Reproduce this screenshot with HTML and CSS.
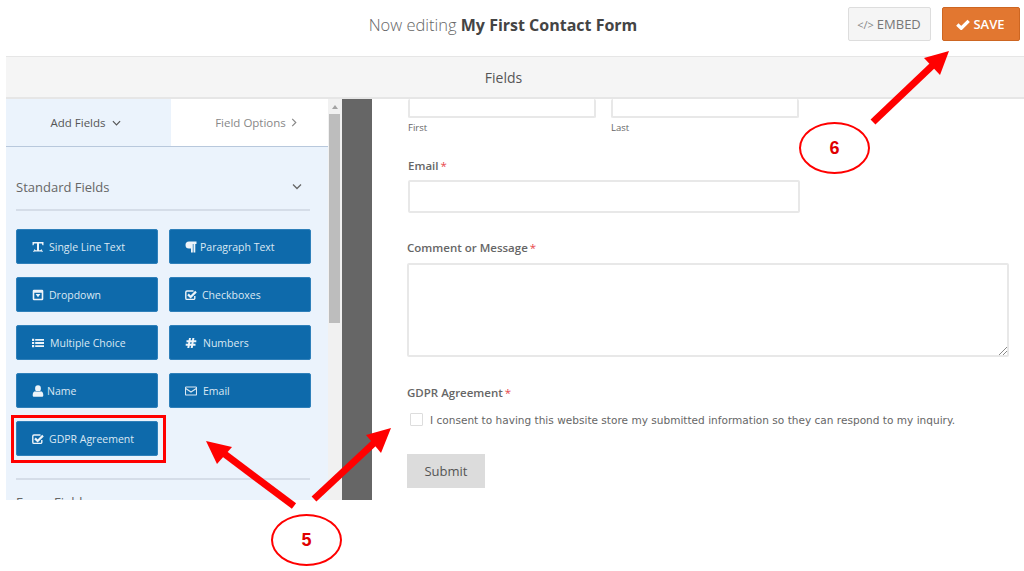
FILE: index.html
```html
<!DOCTYPE html>
<html lang="en">
<head>
<meta charset="utf-8">
<title>Now editing My First Contact Form</title>
<link rel="stylesheet" href="styles.css">
</head>
<body>
<div class="page">
  <header class="topbar">
    <h1 class="title"><span class="title-light">Now editing</span> <strong>My First Contact Form</strong></h1>
    <div class="actions">
      <button class="btn-embed"><span class="code">&lt;/&gt;</span> EMBED</button>
      <button class="btn-save"><svg class="save-check" viewBox="0 0 16 12"><path d="M1.500 6 L6 10.300 L14.500 1.800" fill="none" stroke="currentColor" stroke-width="3.800"/></svg> SAVE</button>
    </div>
  </header>
  <div class="frame">
    <div class="fields-bar">Fields</div>
    <div class="workspace">
      <aside class="sidebar">
        <div class="tabs">
          <div class="tab tab-active">Add Fields <svg class="chev" viewBox="0 0 10 6"><path d="M1 1 L5 5 L9 1"/></svg></div>
          <div class="tab tab-idle">Field Options <svg class="chev chev-r" viewBox="0 0 6 10"><path d="M1 1 L5 5 L1 9"/></svg></div>
        </div>
        <div class="panel">
          <div class="section-head">Standard Fields <svg class="chev" viewBox="0 0 10 6"><path d="M1 1 L5 5 L9 1"/></svg></div>
          <div class="grid">
            <div class="field-btn"><svg class="ico" viewBox="0 0 12 12"><path d="M0.500 1h11v3.300h-1L9.800 2.600H7v6.700h1.300L9.800 8v1.200L11 10.200 9.800 11.200V10.400H2.200v.8L1 10.200 2.200 9.200V8L3.700 9.300H5V2.600H2.200L1.500 4.300h-1z"/></svg>Single Line Text</div>
            <div class="field-btn"><svg class="ico ico-para" viewBox="0 0 12 12"><path d="M4 .5H11.500V3H10.300V11.500H8.500V3H7.800V11.500H6V7.500H4A3.500 3.500 0 0 1 4 .5z"/></svg>Paragraph Text</div>
            <div class="field-btn"><svg class="ico" viewBox="0 0 12 12"><path fill-rule="evenodd" d="M2 .7h8A1.300 1.300 0 0 1 11.300 2v8A1.300 1.300 0 0 1 10 11.300H2A1.300 1.300 0 0 1 .7 10V2A1.300 1.300 0 0 1 2 .7zM2.300 3.800V9.700H9.700V3.800zM3.600 5H8.400L6 8.200z"/></svg>Dropdown</div>
            <div class="field-btn"><svg class="ico" viewBox="0 0 12 12"><path class="check-box" d="M9.800 7v2.200a1.200 1.200 0 0 1-1.200 1.200H2a1.200 1.200 0 0 1-1.200-1.200V3.200A1.200 1.200 0 0 1 2 2H8.500"/><path class="check-tick" d="M3 5.400 L5.600 8 L11 2.600"/></svg>Checkboxes</div>
            <div class="field-btn"><svg class="ico ico-list" viewBox="0 0 12 12"><path d="M0 1.800h2.200v2.200H0zM3.200 2h8.800v1.800H3.200zM0 4.900h2.200v2.200H0zM3.200 5.100h8.800v1.800H3.200zM0 8h2.200v2.200H0zM3.200 8.200h8.800V10H3.200z"/></svg>Multiple Choice</div>
            <div class="field-btn"><svg class="ico ico-list" viewBox="0 0 12 12"><path d="M4 1h2L5.600 3.300H7L7.400 1h2L9 3.300h2.300V5.200H8.700L8.400 6.800H10.500V8.700H8.100L7.700 11h-2L6.100 8.700H4.700L4.300 11h-2L2.700 8.700H.7V6.800H3L3.300 5.200H1.500V3.300H3.600zM5.300 5.200L5 6.800H6.400L6.700 5.200z"/></svg>Numbers</div>
            <div class="field-btn"><svg class="ico ico-name" viewBox="0 0 12 12"><path d="M6 .2a2.900 3.200 0 0 1 2.900 3.200A2.900 3.200 0 0 1 6 6.600 2.900 3.200 0 0 1 3.100 3.400 2.900 3.200 0 0 1 6 .2zM3 6.300C4 7.200 8 7.200 9 6.300c1.500.3 2.300 1.900 2.300 3.900 0 1-.6 1.600-1.500 1.600H2.200C1.300 11.800.7 11.200.7 10.200c0-2 .8-3.600 2.300-3.900z"/></svg>Name</div>
            <div class="field-btn"><svg class="ico ico-list ico-mail" viewBox="0 0 12 12"><path d="M1.300 2h9.400a.8.8 0 0 1 .8.800v6.400a.8.8 0 0 1-.8.800H1.300a.8.8 0 0 1-.8-.8V2.800a.8.8 0 0 1 .8-.8z"/><path d="M.7 3.500 L6 7 L11.300 3.500"/></svg>Email</div>
            <div class="field-btn"><svg class="ico" viewBox="0 0 12 12"><path class="check-box" d="M9.800 7v2.200a1.200 1.200 0 0 1-1.200 1.200H2a1.200 1.200 0 0 1-1.200-1.200V3.200A1.200 1.200 0 0 1 2 2H8.500"/><path class="check-tick" d="M3 5.400 L5.600 8 L11 2.600"/></svg>GDPR Agreement</div>
          </div>
          <div class="divider"></div>
          <div class="section-next">Fancy Fields</div>
        </div>
      </aside>
      <div class="scrollbar">
        <div class="scroll-up"></div>
        <div class="scroll-thumb"></div>
      </div>
      <div class="strip"></div>
      <main class="form">
        <div class="name-row">
          <div class="name-col"><div class="input input-cut"></div><div class="sublabel">First</div></div>
          <div class="name-col"><div class="input input-cut"></div><div class="sublabel">Last</div></div>
        </div>
        <div class="label label-email">Email<span class="req">*</span></div>
        <div class="input input-email"></div>
        <div class="label label-comment">Comment or Message<span class="req">*</span></div>
        <div class="input textarea">
          <svg class="grip" viewBox="0 0 8 8"><path d="M0 8 L8 0 M4 8 L8 4"/></svg>
        </div>
        <div class="label label-gdpr">GDPR Agreement<span class="req">*</span></div>
        <div class="consent"><span class="checkbox"></span><span class="consent-text">I consent to having this website store my submitted information so they can respond to my inquiry.</span></div>
        <div class="submit">Submit</div>
      </main>
    </div>
  </div>
  <div class="callout callout-five">5</div>
  <div class="callout callout-six">6</div>
  <div class="highlight"></div>
  <svg class="arrows" viewBox="0 0 1024 571">
    <path d="M294 506 L222 452"/>
    <path d="M314 499 L374 443"/>
    <path d="M873 122 L933 65"/>
    <polygon points="206,441 232,447 217,464"/>
    <polygon points="391,428 366,435 381,453"/>
    <polygon points="949,51 924,58 940,75"/>
  </svg>
</div>
</body>
</html>
```

FILE: styles.css
```css
* { box-sizing: border-box; }
html, body { margin: 0; padding: 0; background: #fff; }
body { font-family: "Open Sans", "Liberation Sans", sans-serif; color: #555; }
.page { position: relative; width: 1024px; height: 571px; overflow: hidden; }

.topbar { position: relative; height: 56px; display: flex; align-items: center; justify-content: center; padding: 0 18px 8px 0; }
.title { margin: 0; font-size: 16px; font-weight: 400; color: #444; white-space: nowrap; }
.title-light { font-weight: 300; color: #666; font-size: 16.500px; }
.title strong { font-weight: 700; color: #444; }
.actions { position: absolute; top: 7px; right: 4px; display: flex; gap: 11px; }
.btn-embed, .btn-save { height: 34px; border-radius: 2px; font-family: inherit; font-size: 13px; padding: 0; display: flex; align-items: center; justify-content: center; gap: 3px; }
.btn-embed { width: 83px; background: #f5f5f5; border: 1px solid #ddd; color: #777; padding-right: 1px; }
.code { font-size: 11px; color: #888; }
.btn-save { width: 78px; background: #e27730; border: 1px solid #cd6622; color: #fff; font-weight: 600; padding-right: 1px; }
.save-check { width: 14px; height: 11px; }

.frame { margin-left: 6px; height: 444px; overflow: hidden; display: flex; flex-direction: column; }
.fields-bar { height: 43px; flex: none; background: #f5f5f5; border-top: 1px solid #e6e6e6; border-bottom: 2px solid #e6e6e6; display: flex; align-items: center; justify-content: center; font-size: 14px; color: #555; padding: 1px 23px 0 0; }
.workspace { flex: 1; display: flex; min-height: 0; }

.sidebar { width: 322px; flex: none; background: #ebf3fc; overflow: hidden; }
.tabs { display: flex; height: 48px; border-bottom: 1px solid #b8c8dc; }
.tab { display: flex; align-items: center; justify-content: center; gap: 6px; font-size: 11.500px; }
.tab-active { width: 165px; color: #555; padding-right: 6px; }
.tab-idle { width: 157px; background: #fff; color: #888; padding-left: 13px; gap: 5px; }
.chev { width: 9px; height: 6px; fill: none; stroke: currentColor; stroke-width: 1.300; }
.chev-r { width: 6px; height: 9px; }

.panel { padding: 0 18px 0 10px; }
.section-head { height: 64px; display: flex; align-items: center; justify-content: space-between; padding: 17px 8px 0 0; font-size: 13px; color: #666; border-bottom: 2px solid #d5dde8; }
.section-head .chev { width: 10px; height: 7px; }
.grid { display: grid; grid-template-columns: 142px 142px; column-gap: 11px; row-gap: 13px; padding-top: 18px; }
.field-btn { height: 35px; background: #0e6aab; border: 1px solid #2f80ba; border-radius: 2px; color: #dbe8f3; font-size: 10.500px; display: flex; align-items: center; padding-left: 15px; white-space: nowrap; }
.ico { width: 12px; height: 12px; fill: #eef4f9; margin-right: 5px; flex: none; }
.ico-para { margin-right: 3px; }
.ico-list { margin-right: 6px; }
.ico-name { margin-right: 3px; }
.ico-mail { fill: none; stroke: #dbe8f3; stroke-width: 1.100; }
.check-box { fill: none; stroke: #eef4f9; stroke-width: 1.400; }
.check-tick { fill: none; stroke: #eef4f9; stroke-width: 2.200; }
.divider { height: 2px; background: #d5dde8; margin-top: 22px; }
.section-next { margin-top: 13px; font-size: 13px; color: #666; }

.scrollbar { width: 14px; flex: none; background: #f1f1f1; position: relative; padding: 0 2px 0 1px; }
.scroll-up { width: 0; height: 0; margin: 6px auto 5px; border-left: 3px solid transparent; border-right: 3px solid transparent; border-bottom: 4px solid #a3a3a3; }
.scroll-thumb { height: 209px; background: #bdbdbd; }
.strip { width: 30px; flex: none; background: #666; }

.form { flex: 1; min-width: 0; padding-left: 35px; }
.name-row { display: flex; gap: 15px; padding-left: 1px; }
.name-col { width: 188px; }
.input { background: #fff; border: 2px solid #e8e8e8; border-radius: 2px; }
.input-cut { height: 19px; border-top: 0; }
.sublabel { font-size: 9.500px; color: #666; line-height: 13px; margin-top: 3px; }
.label { font-size: 11.500px; font-weight: 600; color: #666; line-height: 16px; }
.label-email { margin-top: 24px; padding-left: 1px; }
.input-email { width: 392px; height: 33px; margin: 6px 0 0 1px; }
.label-comment { margin-top: 27px; }
.textarea { position: relative; width: 602px; height: 94px; margin-top: 7px; }
.grip { position: absolute; right: 0; bottom: 0; width: 8px; height: 8px; fill: none; stroke: #888; stroke-width: 1; }
.label-gdpr { margin-top: 28px; }
.req { color: #e8474c; font-weight: 400; margin-left: 2px; }
.consent { display: flex; align-items: center; margin-top: 11px; padding-left: 3px; height: 15px; }
.checkbox { width: 13px; height: 13px; flex: none; border: 1px solid #ddd; border-radius: 1px; margin-right: 7px; }
.consent-text { font-family: "DejaVu Sans", sans-serif; font-size: 10.560px; color: #666; white-space: nowrap; }
.submit { width: 78px; height: 34px; margin-top: 27px; background: #dcdcdc; display: flex; align-items: center; justify-content: center; font-size: 13px; color: #555; }

.callout { position: absolute; width: 71px; height: 52px; border: 2.500px solid #f00; border-radius: 50%; color: #e00000; font-family: "Liberation Sans", sans-serif; font-weight: 700; font-size: 18px; display: flex; align-items: center; justify-content: center; }
.callout-five { left: 271px; top: 514px; }
.callout-six { left: 799px; top: 122px; }
.highlight { position: absolute; left: 11px; top: 415px; width: 155px; height: 48px; border: 3px solid #f00; }
.arrows { position: absolute; left: 0; top: 0; width: 1024px; height: 571px; pointer-events: none; }
.arrows path { fill: none; stroke: #ff0000; stroke-width: 7; }
.arrows polygon { fill: #ff0000; }
```
